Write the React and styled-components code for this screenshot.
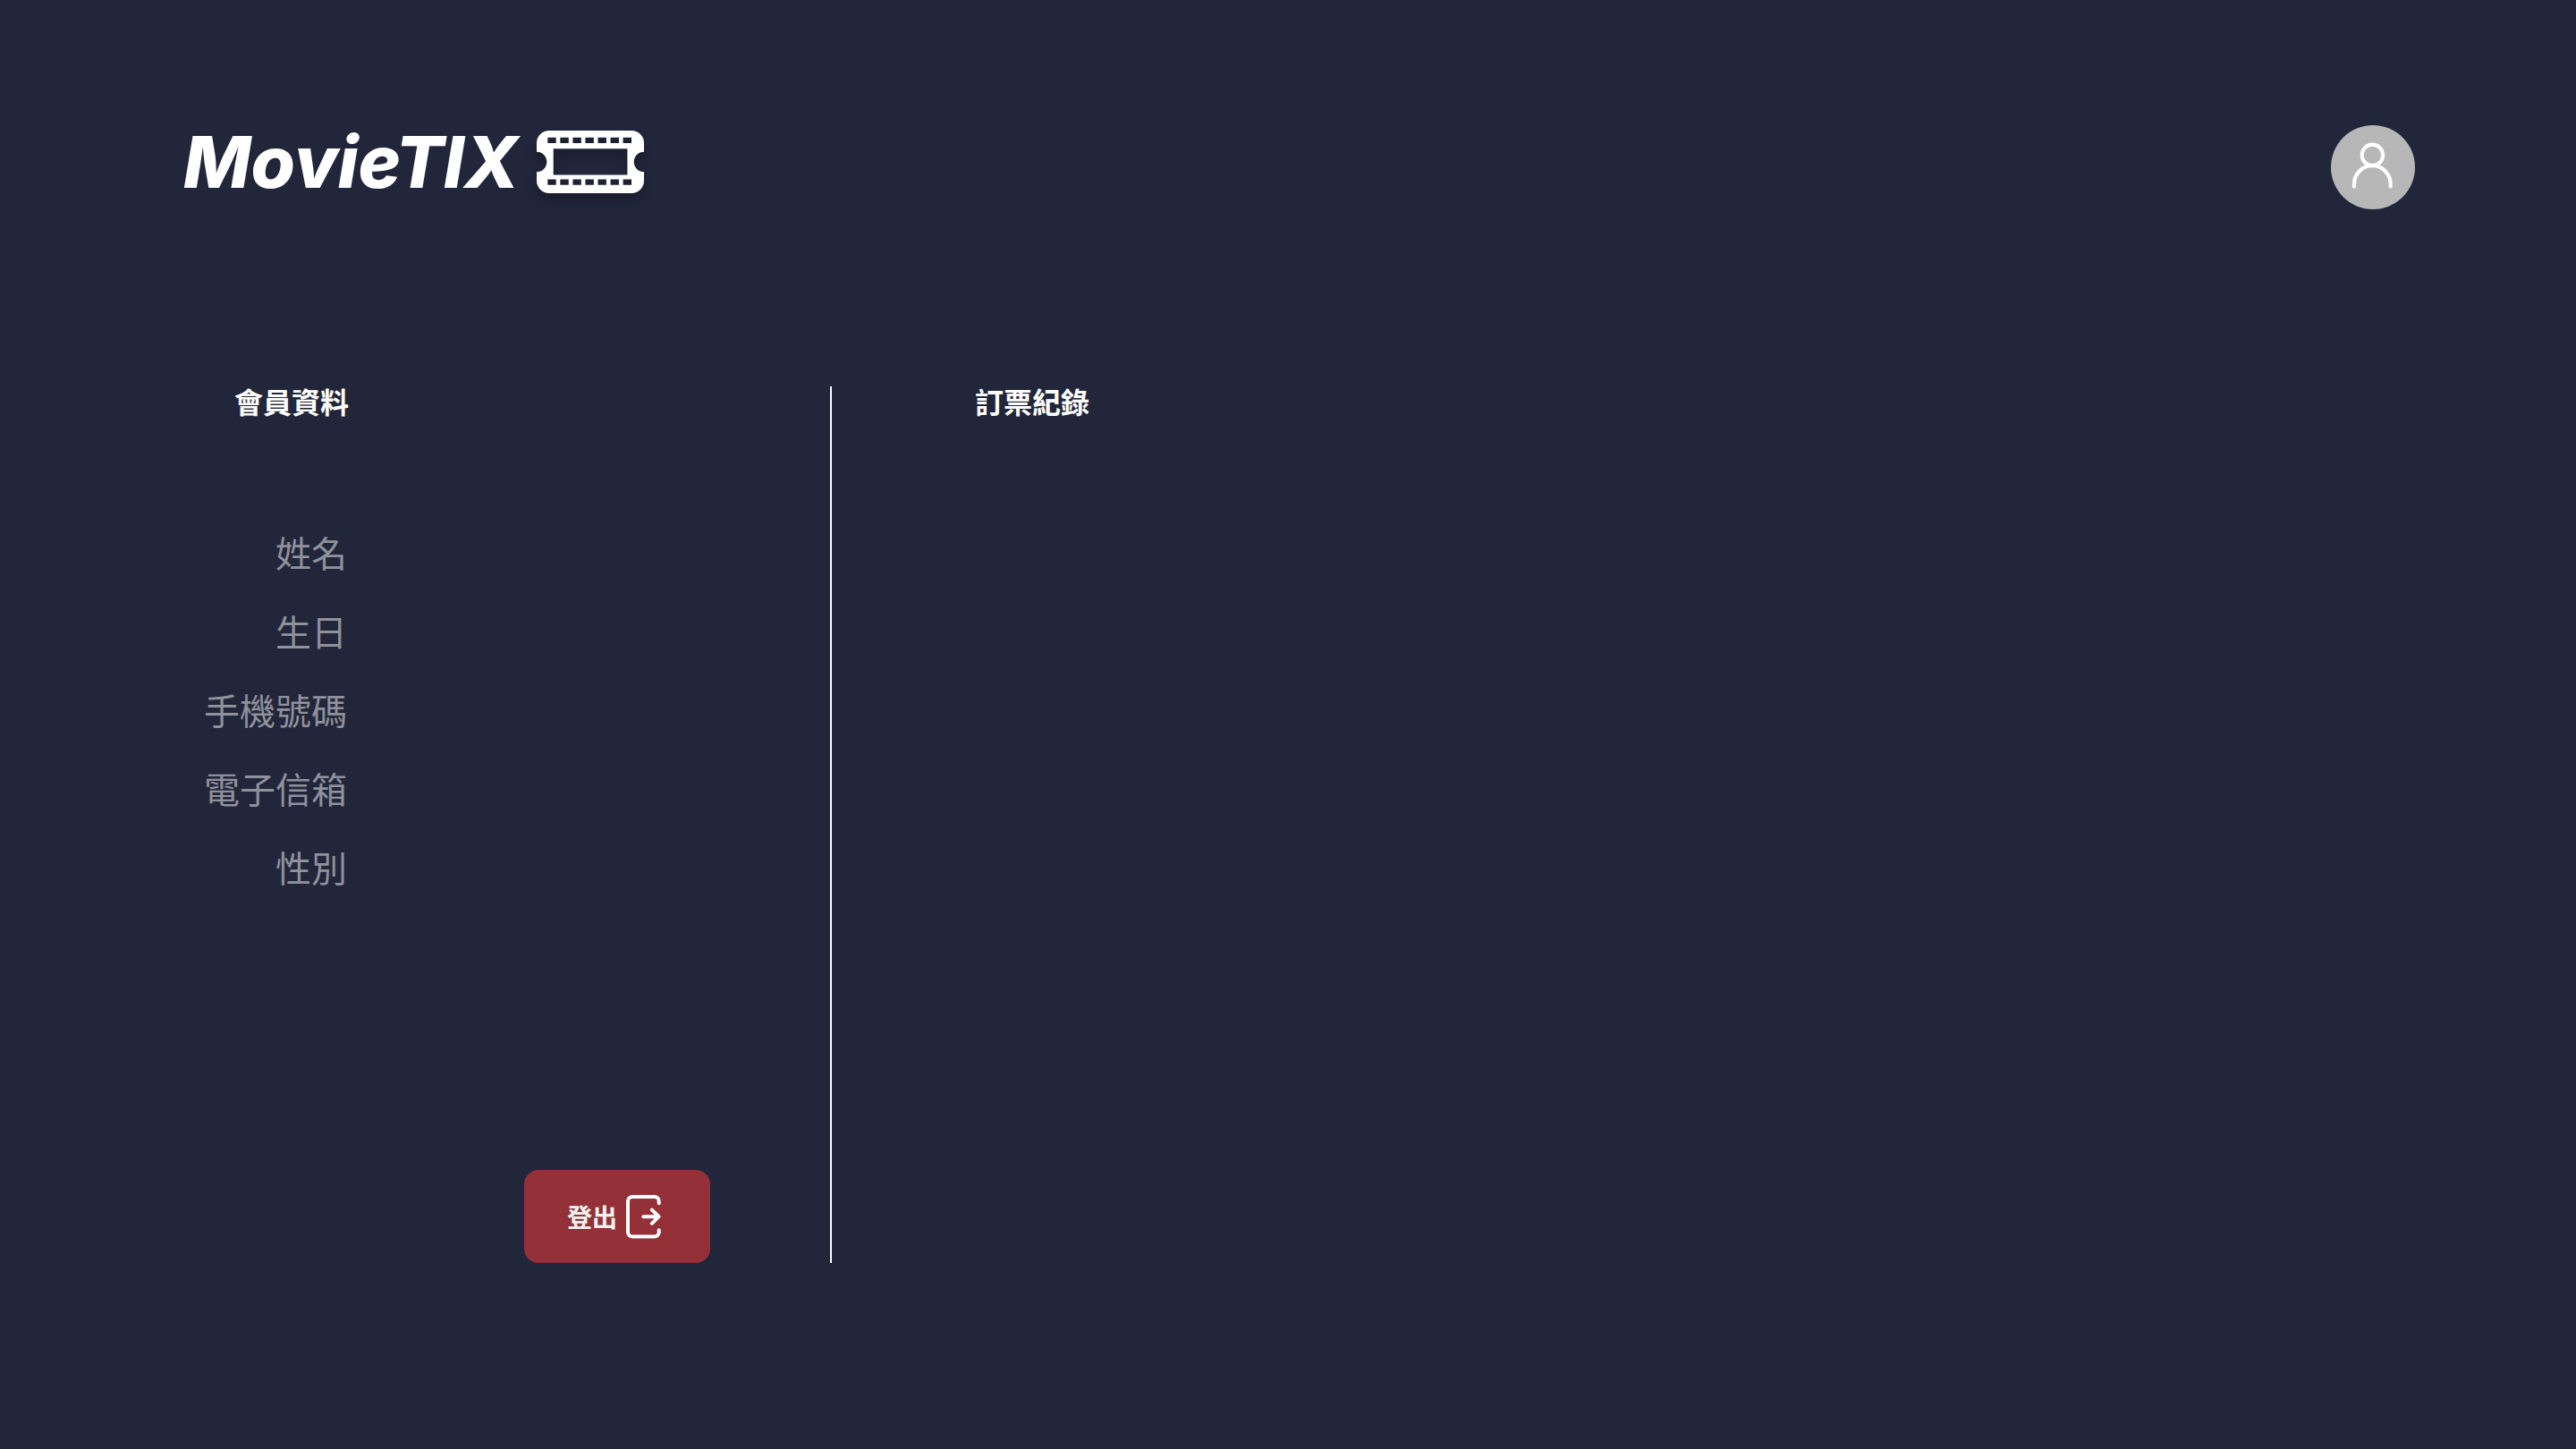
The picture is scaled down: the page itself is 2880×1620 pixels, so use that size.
import React from "react";
import styled, { createGlobalStyle } from "styled-components";

const GlobalStyle = createGlobalStyle`
  *, *::before, *::after { box-sizing: border-box; }
  body {
    margin: 0;
    background: #22263a;
    color: #ffffff;
    font-family: Inter, "Noto Sans CJK TC", sans-serif;
  }
`;

const Page = styled.div`
  display: flex;
  flex-direction: column;
  min-height: 100vh;
  padding: 140px 180px 208px;
`;

const Header = styled.header`
  display: flex;
  justify-content: space-between;
  align-items: flex-start;
  margin-bottom: 198px;
`;

const Logo = styled.a`
  display: flex;
  align-items: center;
  gap: 20px;
  height: 82px;
  padding-left: 25px;
  color: inherit;
  text-decoration: none;
  font-size: 80px;
  line-height: 82px;
  font-weight: 800;
  font-style: italic;
`;

const TicketSvg = styled.svg`
  display: block;
  filter: drop-shadow(0 8px 6px rgba(0, 0, 0, 0.25));
`;

const Avatar = styled.button`
  width: 94px;
  height: 94px;
  padding: 0;
  border: 0;
  border-radius: 50%;
  background: #b7b7b7;
  cursor: pointer;

  svg { display: block; }
`;

const Main = styled.main`
  display: flex;
  flex: 1;
`;

const Profile = styled.section`
  display: flex;
  flex-direction: column;
  flex: 0 0 750px;
  border-right: 2px solid #ffffff;
`;

const Records = styled.section`
  flex: 1;
  padding-left: 160px;
`;

const Title = styled.h2`
  margin: 0;
  padding-left: ${(p) => p.$indent || 0}px;
  font-family: "Noto Sans CJK TC", sans-serif;
  font-size: 32px;
  line-height: 32px;
  font-weight: 700;
`;

const Fields = styled.dl`
  margin: 109px 0 0;
`;

const Field = styled.div`
  display: grid;
  grid-template-columns: 208px 1fr;
  column-gap: 40px;
  font-family: "Noto Sans CJK TC", sans-serif;
  font-size: 40px;
  line-height: 88px;
`;

const Label = styled.dt`
  color: #8f919b;
  text-align: right;
`;

const Value = styled.dd`
  margin: 0;
`;

const LogoutButton = styled.button`
  display: flex;
  align-items: center;
  align-self: flex-end;
  gap: 10px;
  width: 208px;
  height: 104px;
  margin: auto 134px 0 0;
  padding: 0 0 0 48px;
  border: 0;
  border-radius: 16px;
  background: #943138;
  color: #f2f2f2;
  font-family: "Noto Sans CJK TC", sans-serif;
  font-size: 28px;
  line-height: 32px;
  font-weight: 700;
  cursor: pointer;
`;

const HOLES = [0, 1, 2, 3, 4, 5, 6];

function TicketIcon() {
  const holes = HOLES.map((i) => {
    const x = 12.3 + i * 14.05;
    return `M${x} 7.7h9.4v6.4h-9.4zM${x} 54.4h9.4v6.4h-9.4z`;
  }).join("");
  return (
    <TicketSvg width="120" height="70" viewBox="0 0 120 70" aria-hidden="true">
      <path
        fill="#ffffff"
        fillRule="evenodd"
        d={`M14 0H106A14 14 0 0 1 120 14V23.7A11.3 11.3 0 0 0 120 46.3V56A14 14 0 0 1 106 70H14A14 14 0 0 1 0 56V46.3A11.3 11.3 0 0 0 0 23.7V14A14 14 0 0 1 14 0ZM18.7 20.3H101.4V49.6H18.7Z${holes}`}
      />
    </TicketSvg>
  );
}

function UserIcon() {
  return (
    <svg width="94" height="94" viewBox="0 0 94 94" fill="none" stroke="#ffffff" strokeWidth="4.2" strokeLinecap="round" aria-hidden="true">
      <circle cx="46.4" cy="33.4" r="11.7" />
      <path d="M26 68.6V65.5A20.3 20.3 0 0 1 66.6 65.5V68.6" />
    </svg>
  );
}

function LogoutIcon() {
  return (
    <svg width="39" height="49" viewBox="0 0 39 49" fill="none" stroke="#ffffff" strokeWidth="4" strokeLinecap="round" strokeLinejoin="round" aria-hidden="true">
      <path d="M36.7 9.3V7A5 5 0 0 0 31.7 2H7A5 5 0 0 0 2 7V41.6A5 5 0 0 0 7 46.6H31.7A5 5 0 0 0 36.7 41.6V39.2" />
      <path d="M19.3 24.2H36.3M28.9 16.7L36.5 24.2L28.9 31.8" />
    </svg>
  );
}

const FIELDS = [
  { label: "姓名", value: "" },
  { label: "生日", value: "" },
  { label: "手機號碼", value: "" },
  { label: "電子信箱", value: "" },
  { label: "性別", value: "" },
];

export default function App() {
  return (
    <>
      <GlobalStyle />
      <Page lang="zh-Hant">
        <Header>
          <Logo href="#">
            MovieTIX
            <TicketIcon />
          </Logo>
          <Avatar type="button" aria-label="會員資料">
            <UserIcon />
          </Avatar>
        </Header>
        <Main>
          <Profile>
            <Title $indent={82}>會員資料</Title>
            <Fields>
              {FIELDS.map((f) => (
                <Field key={f.label}>
                  <Label>{f.label}</Label>
                  <Value>{f.value}</Value>
                </Field>
              ))}
            </Fields>
            <LogoutButton type="button">
              登出
              <LogoutIcon />
            </LogoutButton>
          </Profile>
          <Records>
            <Title>訂票紀錄</Title>
          </Records>
        </Main>
      </Page>
    </>
  );
}
